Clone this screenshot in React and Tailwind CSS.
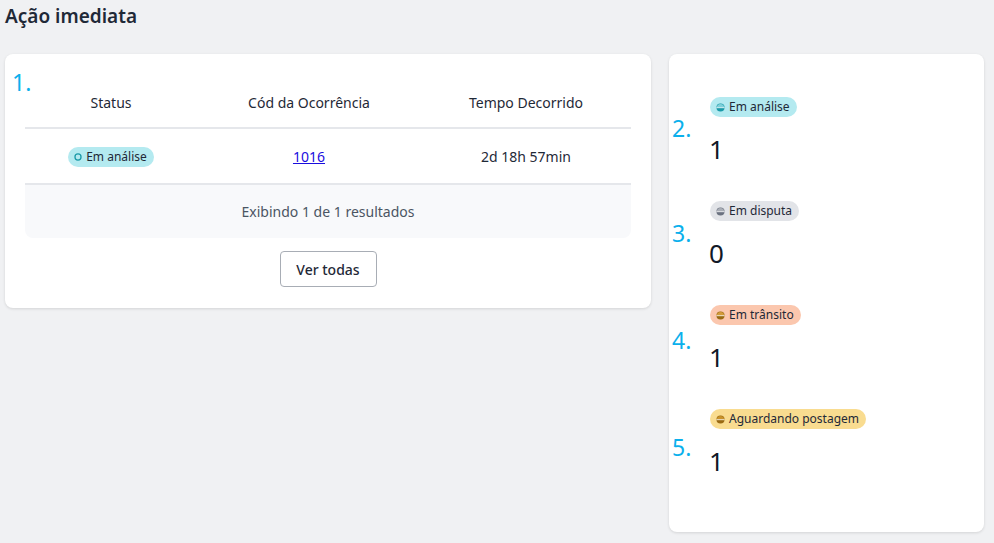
import React from "react";

function Dot({ fill, light }) {
  return (
    <svg width="9" height="9" viewBox="0 0 10 10" className="shrink-0">
      <circle cx="5" cy="5" r="4.5" fill={fill} />
      <path d="M1 5 A4 4 0 0 1 9 5 Z" fill={light} />
      <line x1="0.5" y1="5.2" x2="9.5" y2="5.2" stroke="white" strokeWidth="0.9" />
    </svg>
  );
}

function Badge({ bg, dot, light, label, outline }) {
  return (
    <span className={`inline-flex items-center gap-[4px] rounded-full pl-[6px] pr-[7px] h-[20px] text-[12px] text-[#1f2937] ${bg}`}>
      {outline ? (
        <svg width="8" height="8" viewBox="0 0 10 10" className="shrink-0">
          <circle cx="5" cy="5" r="3.8" fill="none" stroke="#1a9aa8" strokeWidth="1.6" />
        </svg>
      ) : (
        <Dot fill={dot} light={light} />
      )}
      {label}
    </span>
  );
}

const stats = [
  { n: "2.", top: "top-[18px]", bg: "bg-[#b4eaf0]", dot: "#1a9aa8", light: "#7fd0da", label: "Em análise", value: "1" },
  { n: "3.", top: "top-[19px]", bg: "bg-[#e2e4e8]", dot: "#6b7280", light: "#a9aeb6", label: "Em disputa", value: "0" },
  { n: "4.", top: "top-[22px]", bg: "bg-[#fbc7ae]", dot: "#9a6a12", light: "#d39b3a", label: "Em trânsito", value: "1" },
  { n: "5.", top: "top-[25px]", bg: "bg-[#f9dc90]", dot: "#9a6a12", light: "#c8922a", label: "Aguardando postagem", value: "1" },
];

export default function App() {
  return (
    <div
      className="w-[994px] h-[543px] bg-[#f0f1f3] text-[#1f2937] overflow-hidden"
      style={{ fontFamily: '"Noto Sans", "Open Sans", sans-serif' }}
    >
      <h1 className="px-[5px] pt-[4px] text-[19px] font-semibold leading-[24px] text-[#1f2937]">Ação imediata</h1>
      <div className="flex items-start gap-[18px] pl-[5px] pt-[26px]">
        <div className="relative w-[646px] h-[254px] bg-white rounded-[8px] shadow-[0_1px_3px_rgba(0,0,0,0.12)] px-[20px] pt-[20px]">
          <span className="absolute left-[7px] top-[15px] text-[23px] leading-[26px] text-[#0bb0ec]">1.</span>
          <table className="w-[606px] table-fixed border-collapse text-[14px]">
            <colgroup>
              <col className="w-[172px]" />
              <col className="w-[224px]" />
              <col className="w-[210px]" />
            </colgroup>
            <thead>
              <tr className="border-b-2 border-[#e5e7eb] h-[54px]">
                <th className="font-normal text-center pt-[3px]">Status</th>
                <th className="font-normal text-center pt-[3px]">Cód da Ocorrência</th>
                <th className="font-normal text-center pt-[3px]">Tempo Decorrido</th>
              </tr>
            </thead>
            <tbody>
              <tr className="border-b-2 border-[#e5e7eb] h-[56px]">
                <td className="text-center">
                  <Badge bg="bg-[#b4eaf0]" label="Em análise" outline />
                </td>
                <td className="text-center">
                  <a className="text-[#1a0dde] underline" href="#">1016</a>
                </td>
                <td className="text-center">2d 18h 57min</td>
              </tr>
            </tbody>
          </table>
          <div className="h-[53px] bg-[#f8f9fb] rounded-b-[8px] flex items-center justify-center text-[14px] text-[#4b5563]">
            Exibindo 1 de 1 resultados
          </div>
          <div className="flex justify-center pt-[13px]">
            <button className="w-[97px] h-[36px] border border-[#a8adb5] rounded-[4px] text-[14px] font-medium text-[#1f2937] bg-white">
              Ver todas
            </button>
          </div>
        </div>
        <div className="relative w-[315px] h-[478px] bg-white rounded-[8px] shadow-[0_1px_3px_rgba(0,0,0,0.12)] pl-[41px] pt-[43px]">
          <div className="flex flex-col gap-[34px]">
            {stats.map((s) => (
              <div key={s.n} className="relative flex flex-col items-start">
                <span className={`absolute left-[-38px] ${s.top} text-[23px] leading-[26px] text-[#0bb0ec]`}>{s.n}</span>
                <Badge bg={s.bg} dot={s.dot} light={s.light} label={s.label} />
                <div className="text-[26px] leading-[36px] mt-[14px] ml-[-1px] text-[#111827]">{s.value}</div>
              </div>
            ))}
          </div>
        </div>
      </div>
    </div>
  );
}
